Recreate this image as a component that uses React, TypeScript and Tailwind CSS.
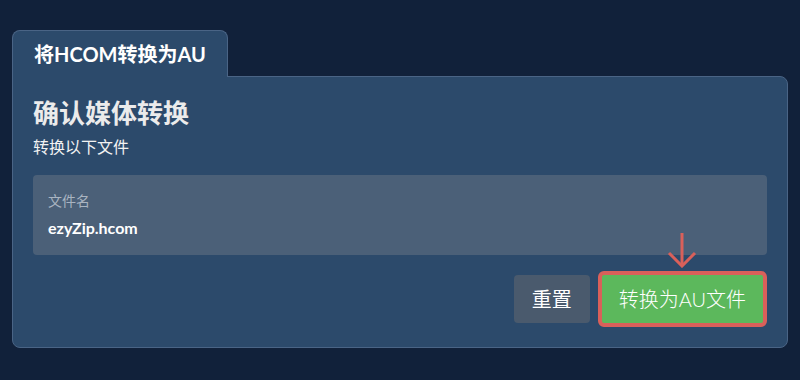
import React from 'react';

const ConvertConfirm: React.FC = () => {
  return (
    <div
      className="min-h-[380px] w-full bg-[#11213a] px-3 pt-[30px]"
      style={{ fontFamily: '"Lato", "Noto Sans CJK SC", sans-serif' }}
    >
      {/* Tab */}
      <div className="relative z-10 -mb-px flex h-[47px] w-[216px] items-center justify-center rounded-t-lg border border-b-0 border-[#4a6485] bg-[#2c4a6b]">
        <span className="text-[20px] font-bold leading-none text-white">将HCOM转换为AU</span>
      </div>

      {/* Panel */}
      <div className="rounded-b-lg rounded-tr-lg border border-[#4a6485] bg-[#2c4a6b] px-5 pb-5 pt-[21px]">
        <h1 className="text-[26px] font-bold leading-[30px] text-[#ebebeb]">确认媒体转换</h1>
        <p className="mt-[7px] text-[16px] leading-6 text-[#f2f2f2]">转换以下文件</p>

        <div className="mt-4 rounded bg-[#4b6078] px-[15px] pb-[15px] pt-4">
          <div className="text-[14px] leading-5 text-[#a9b4c1]">文件名</div>
          <div className="mt-[5px] text-[16px] font-bold leading-6 text-white">ezyZip.hcom</div>
        </div>

        <div className="mt-[16px] flex items-center justify-end gap-2">
          <button className="h-12 rounded bg-[#4a5a6d] px-[18px] text-[20px] leading-none text-white">
            重置
          </button>
          <div className="relative">
            {/* arrow pointing at the button */}
            <svg
              className="absolute bottom-full left-1/2 mb-[3px] -translate-x-1/2"
              width="32"
              height="36"
              viewBox="0 0 32 36"
              fill="none"
              stroke="#d9605a"
              strokeWidth="3"
            >
              <path d="M16 1 V34" />
              <path d="M3 21 L16 34 L29 21" />
            </svg>
            <button className="h-14 rounded-md border-4 border-[#d9605a] bg-[#5cb85c] px-[17px] text-[20px] font-light leading-none text-white">
              转换为AU文件
            </button>
          </div>
        </div>
      </div>
    </div>
  );
};

export default function App() {
  return <ConvertConfirm />;
}
